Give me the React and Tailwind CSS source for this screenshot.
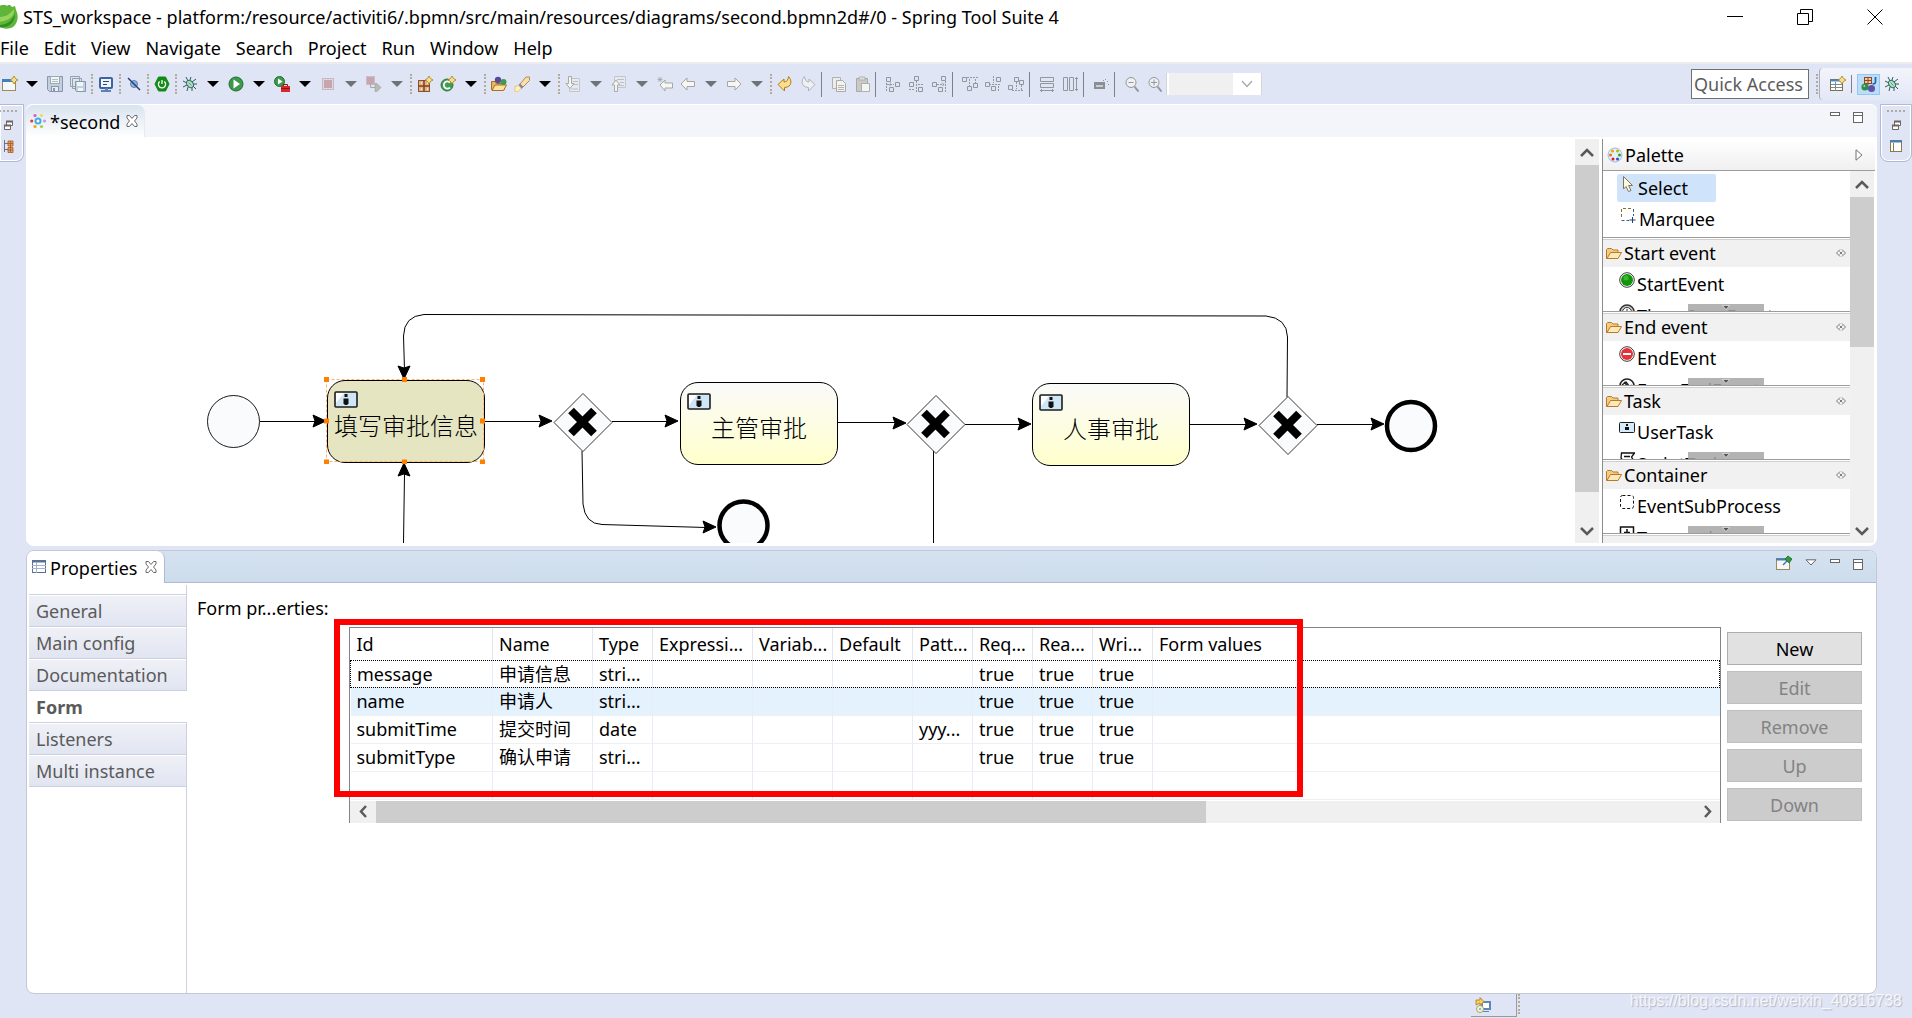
import { useState } from "react";
import clsx from "clsx";

const menus = ["File", "Edit", "View", "Navigate", "Search", "Project", "Run", "Window", "Help"];

const tabs = ["General", "Main config", "Documentation", "Form", "Listeners", "Multi instance"];

const columns = ["Id", "Name", "Type", "Expressi...", "Variab...", "Default", "Patt...", "Req...", "Rea...", "Wri...", "Form values"];

const rows = [
  ["message", "申请信息", "stri...", "", "", "", "", "true", "true", "true", ""],
  ["name", "申请人", "stri...", "", "", "", "", "true", "true", "true", ""],
  ["submitTime", "提交时间", "date", "", "", "", "yyy...", "true", "true", "true", ""],
  ["submitType", "确认申请", "stri...", "", "", "", "", "true", "true", "true", ""],
  ["", "", "", "", "", "", "", "", "", "", ""],
];

// "|" is a dotted grip, "-" a solid separator, "v" / "V" a grey / black menu arrow
const toolbar = [
  "new", "V", "save", "saveAll", "|", "monitor", "|", "skip", "|", "power", "|", "bug", "V", "run", "V", "runTools", "V",
  "stop", "v", "relaunch", "v", "|", "pkg", "newClass", "V", "|", "folderBalls", "rocket", "V", "|", "docDown", "v",
  "docUp", "v", "backStar", "back", "v", "forward", "v", "|", "undo", "redo", "-", "copy", "paste", "-", "alignL",
  "alignC", "alignR", "-", "alignT", "alignM", "alignB", "-", "matchW", "matchH", "-", "snap", "-", "zoomOut", "zoomIn",
];

const spark = <path d="M12 0l1.500 2.500L16 4l-2.500 1.500L12 8l-1.500-2.500L8 4l2.500-1.500z" fill="#f7e08a" stroke="#a8791c" strokeWidth=".8" />;
const arrowLeft = "M1 8l6-6v3.500h7.500v5H7V14z";

const icons = {
  new: (
    <>
      <rect x=".5" y="3.500" width="13" height="11" fill="#f4f8fd" stroke="#a08a50" />
      <rect x="0" y="3" width="14" height="3" fill="#3f7fc4" />
      {spark}
    </>
  ),
  save: (
    <>
      <path d="M.5 .5h15v15h-13l-2-2z" fill="#c3cfdd" stroke="#8597ac" />
      <rect x="3.500" y=".5" width="9" height="7" fill="#f2f5f8" stroke="#9aaabb" />
      <path d="M5 3.500h6M5 5.500h6" stroke="#b5c2a8" />
      <rect x="4.500" y="10.500" width="7" height="5" fill="#e9eef3" stroke="#8597ac" />
      <rect x="6" y="12" width="2" height="3" fill="#8597ac" />
    </>
  ),
  saveAll: (
    <>
      <path d="M.5 .5h9v10h-9zM2.500 2.500h9v10h-9z" fill="#dde4eb" stroke="#93a2b1" />
      <path d="M5.500 5.500h10v10h-9l-1-1z" fill="#c3cfdd" stroke="#8597ac" />
      <rect x="7" y="6" width="6" height="4" fill="#f2f5f8" />
      <rect x="8" y="12" width="5" height="3" fill="#f2f5f8" />
    </>
  ),
  monitor: (
    <>
      <rect x="2" y="2" width="12" height="10" rx="1" fill="#f2f6fc" stroke="#3d63a0" strokeWidth="2" />
      <path d="M5 5.500h6M5 8.500h4" stroke="#27467e" />
      <path d="M3 15h10M7 13h3" stroke="#5d80b5" strokeWidth="2" />
    </>
  ),
  skip: (
    <>
      <circle cx="8" cy="8" r="3.500" fill="#8fb0d8" stroke="#5c80ae" />
      <path d="M2 2l12 12" stroke="#1f3f78" strokeWidth="1.400" />
    </>
  ),
  power: (
    <>
      <path d="M4.500 1h7L15 8l-3.500 7h-7L1 8z" fill="#118a16" stroke="#118a16" strokeLinejoin="round" />
      <path d="M5.700 5.500a3.600 3.600 0 1 0 4.600 0M8 4v4" stroke="#fff" strokeWidth="1.300" fill="none" />
    </>
  ),
  bug: (
    <>
      <path d="M4 1l2 4M9 1l-1 3M14 3l-4 3M1 5l4 2M15 8h-4M1 11l4-2M5 15l1-4M10 15v-4M14 13l-3-3" stroke="#2d5d5c" />
      <ellipse cx="8" cy="8" rx="3" ry="4" fill="#b5dfba" stroke="#33706b" transform="rotate(-40 8 8)" />
      <path d="M6.500 6.500l3 3" stroke="#5c9c86" />
    </>
  ),
  run: (
    <>
      <circle cx="8" cy="8" r="7" fill="#3c9a4a" stroke="#1d7031" />
      <path d="M5.500 3.500L12 8l-6.500 4.500z" fill="#fff" />
    </>
  ),
  runTools: (
    <>
      <circle cx="5.500" cy="5.500" r="5" fill="#3c9a4a" stroke="#1d7031" />
      <path d="M4 2.500L8.500 5.500 4 8.500z" fill="#fff" />
      <path d="M7 10h9v6H7z" fill="#d62a2a" />
      <path d="M9.500 10V8.500h4V10M7 12.500h9" stroke="#8f1414" fill="none" />
    </>
  ),
  stop: (
    <>
      <rect x="2.500" y="2.500" width="11" height="11" fill="#e1d5df" stroke="#c7b7c4" />
      <rect x="4" y="4" width="8" height="8" fill="#c5a5ae" />
    </>
  ),
  relaunch: (
    <>
      <rect x=".5" y=".5" width="8" height="8" fill="#c5a5ae" stroke="#cbbcc8" />
      <path d="M4.500 8v3.500H9" stroke="#a5aaa5" fill="none" />
      <path d="M9 7.500h2l4 4-4 4H9z" fill="#b4bcb5" stroke="#9aa39c" strokeWidth=".6" />
    </>
  ),
  pkg: (
    <>
      <rect x="1.500" y="4.500" width="11" height="11" fill="#e3b184" stroke="#8a5430" />
      <path d="M7 4v12M1 10h12" stroke="#7c4523" strokeWidth="1.500" />
      <path d="M4 7h1M10 7h1M4 13h1M10 13h1" stroke="#fbe5cc" strokeWidth="2" />
      {spark}
    </>
  ),
  newClass: (
    <>
      <circle cx="7" cy="9" r="6" fill="#3f9c51" stroke="#2a7a3c" />
      <path d="M10 6.500a3.600 3.600 0 1 0 0 5" stroke="#fff" strokeWidth="1.800" fill="none" />
      {spark}
    </>
  ),
  folderBalls: (
    <>
      <path d="M.5 5.500h4l1 2h8v6H.5z" fill="#e7b65e" stroke="#a8711e" />
      <circle cx="7" cy="4" r="3.200" fill="#5a4a9c" />
      <circle cx="12.500" cy="6" r="3" fill="#3c9a58" />
      <path d="M1 14.500l3-5.500h11.500l-3 5.500z" fill="#fbe3a4" stroke="#a8711e" />
    </>
  ),
  rocket: (
    <>
      <path d="M6 8L12 1l3.500 0 0 3.500L9 11z" fill="#f8e0ae" stroke="#b48a4a" />
      <path d="M5 8.500l3.500 3.500" stroke="#7d83b8" strokeWidth="2.500" />
      <path d="M1 10.500l4-1 2 3-3 3-3 .5z" fill="#fff4b8" stroke="#e4b457" strokeWidth=".7" />
    </>
  ),
  docDown: (
    <>
      <path d="M4.500 2.500h10v13h-10z" fill="#e6e9ee" stroke="#c2c6cc" />
      <path d="M8 5.500h5M8 8.500h5M6 13h7" stroke="#bcc0c6" />
      <path d="M3.500 .5h3v7h2.500L5 12.500 1 7.500h2.500z" fill="#f4f4f2" stroke="#a9a9a6" />
    </>
  ),
  docUp: (
    <>
      <path d="M3.500 .5h11v11h-11z" fill="#e6e9ee" stroke="#c2c6cc" />
      <path d="M6 3.500h7M9 6.500h4M9 9.500h4" stroke="#bcc0c6" />
      <path d="M3.500 15.500h3V9h2.500L5 4 1 9h2.500z" fill="#f4f4f2" stroke="#a9a9a6" />
    </>
  ),
  backStar: (
    <>
      <path d="M3 9l5-5v3h7.500v5H8v3z" fill="#f6f6f3" stroke="#a6a6a2" />
      <path d="M3 1v5M.5 3.500h5M1 1.500l4 4M5 1.500l-4 4" stroke="#a6a6a2" strokeWidth=".8" />
    </>
  ),
  back: <path d={arrowLeft} fill="#f6f6f3" stroke="#a6a6a2" />,
  forward: <path d={arrowLeft} fill="#f6f6f3" stroke="#a6a6a2" transform="matrix(-1 0 0 1 16 0)" />,
  undo: <path d="M1 8.500L7 3v3c3 0 4-2 4.500-5.500C15 4 15.500 11 7.500 11.500V15z" fill="#ffe08a" stroke="#b27a1e" />,
  redo: <path d="M1 8.500L7 3v3c3 0 4-2 4.500-5.500C15 4 15.500 11 7.500 11.500V15z" fill="#eef0f2" stroke="#b0b3b8" transform="matrix(-1 0 0 1 16 0)" />,
  copy: (
    <>
      <path d="M1.500 1.500h8v11h-8z" fill="#ececea" stroke="#b0b0ae" />
      <path d="M5.500 4.500h6l3 3v8h-9z" fill="#f2f2f0" stroke="#a9a9a6" />
      <path d="M7 9.500h6M7 11.500h6M7 13.500h6" stroke="#b5b5b2" />
    </>
  ),
  paste: (
    <>
      <path d="M2.500 2.500h11v13h-11z" fill="#c9c9c6" stroke="#a9a9a6" />
      <path d="M5 1h6v3H5z" fill="#dededc" stroke="#a9a9a6" strokeWidth=".8" />
      <path d="M7.500 7.500h8v8h-8z" fill="#f4f4f2" stroke="#b0b0ae" />
    </>
  ),
  alignL: (
    <>
      <path d="M1.500 1.500h4v4h-4zM10.500 6.500h4v4h-4zM4.500 11.500h4v4h-4z" />
      <path d="M1.500 7v9M2 8.500h7M6 6.500l-2 2 2 2" strokeDasharray="2 1" />
    </>
  ),
  alignC: (
    <>
      <path d="M6.500 .5h4v4h-4zM1.500 6.500h4v4h-4zM10.500 11.500h4v4h-4z" />
      <path d="M8.500 5v11M10 8.500h5M1 13.500h6" strokeDasharray="2 1" />
    </>
  ),
  alignR: (
    <>
      <path d="M10.500 .5h4v4h-4zM1.500 6.500h4v4h-4zM7.500 11.500h4v4h-4z" />
      <path d="M14.500 5v11M6 8.500h7M11 6.500l2 2-2 2" strokeDasharray="2 1" />
    </>
  ),
  alignT: (
    <>
      <path d="M.5 1.500h4v4h-4zM5.500 10.500h4v4h-4zM11.500 7.500h4v4h-4z" />
      <path d="M5 1.500h11M7.500 3v7M13.500 3v4" strokeDasharray="2 1" />
    </>
  ),
  alignM: (
    <>
      <path d="M.5 6.500h4v4h-4zM6.500 10.500h4v4h-4zM11.500 1.500h4v4h-4z" />
      <path d="M4 8.500h12M8.500 0v7M13.500 10v5" strokeDasharray="2 1" />
    </>
  ),
  alignB: (
    <>
      <path d="M.5 9.500h4v4h-4zM6.500 1.500h4v4h-4zM11.500 4.500h4v4h-4z" />
      <path d="M4 14.500h12M8.500 6v7M13.500 9v5" strokeDasharray="2 1" />
    </>
  ),
  matchW: (
    <>
      <path d="M1.500 1.500h13v4h-13zM1.500 7.500h13v4h-13z" />
      <path d="M1 14.500h14M3 13l-1.500 1.500L3 16M13 13l1.500 1.500L13 16" />
    </>
  ),
  matchH: (
    <>
      <path d="M1.500 1.500h4v13h-4zM7.500 1.500h4v13h-4z" />
      <path d="M14.500 1v14M13 3l1.500-1.500L16 3M13 13l1.500 1.500L16 13" />
    </>
  ),
  snap: (
    <>
      <rect x="1" y="6" width="11" height="7" fill="#8b8e93" stroke="none" />
      <path d="M3 9h7v2H3z" fill="#c9ccd2" stroke="none" />
      <path d="M12 3.500h1M14 5.500h1M10 4.500h1M15 8.500h1" />
    </>
  ),
  zoomOut: (
    <>
      <circle cx="7" cy="6.500" r="5" fill="#eef0f2" />
      <path d="M4.500 6.500h5" />
      <path d="M10.500 10.500l4 5" strokeWidth="2" />
    </>
  ),
  zoomIn: (
    <>
      <circle cx="7" cy="6.500" r="5" fill="#eef0f2" />
      <path d="M4 6.500h6M7 3.500v6" />
      <path d="M10.500 10.500l4 5" strokeWidth="2" />
    </>
  ),
  perspective: (
    <>
      <rect x=".5" y="3.500" width="12" height="11" fill="#fff" stroke="#7b6f4a" />
      <path d="M0 4.500h13" stroke="#4a86c4" strokeWidth="2" />
      <path d="M1 8.500h11M5.500 6v9M1 11.500h11" stroke="#7b8c8a" />
      {spark}
    </>
  ),
  java: (
    <>
      <rect x="3.500" y="1.500" width="7" height="6" fill="#f0c9a0" stroke="#8a4b24" />
      <path d="M7 1v8M3 4.500h8" stroke="#8a4b24" />
      <path d="M14.500 1v5c0 2-2 2-3 1.500" stroke="#2f62a8" strokeWidth="1.700" fill="none" />
      <circle cx="4" cy="11" r="3.600" fill="#2f8d4a" />
      <circle cx="10.500" cy="12.500" r="3.500" fill="#5c52a8" />
      <circle cx="3.300" cy="10" r="1" fill="#a8dbb0" />
    </>
  ),
  restore: (
    <>
      <path d="M6.500 4.500h6v4h-6z" fill="#fff" stroke="#6b6462" />
      <path d="M6 4.500h7" stroke="#6b6462" strokeWidth="2" />
      <path d="M4.500 8.500h6v4h-6z" fill="#fff" stroke="#6b6462" />
      <path d="M4 8.500h7" stroke="#6b6462" strokeWidth="2" />
    </>
  ),
  tree: (
    <>
      <path d="M4.500 2v12M5 5.500h3M5 11.500h3" stroke="#6b7482" />
      <path d="M8 3h5v5H8zM8 9.500h5v5H8z" fill="#e8a268" stroke="#a8581c" strokeWidth=".8" />
      <path d="M10.500 3v11M8 5.500h5M8 12h5" stroke="#a8581c" strokeWidth=".8" />
    </>
  ),
  layout: (
    <>
      <rect x="2.500" y="2.500" width="11" height="11" fill="#fff" stroke="#8a7a4c" />
      <path d="M2 3.500h12" stroke="#3f7fc4" strokeWidth="2" />
      <path d="M5.500 5v9" stroke="#8a7a4c" />
    </>
  ),
  diagram: (
    <>
      <circle cx="8" cy="8" r="2.500" fill="#fff" stroke="#41aee8" strokeWidth="2" />
      <circle cx="5" cy="2.500" r="1.600" fill="#e05ac0" />
      <circle cx="11.500" cy="2.500" r="1.600" fill="#f3dc4a" />
      <circle cx="1.700" cy="8" r="1.600" fill="#ef3a32" />
      <circle cx="14.500" cy="8" r="1.600" fill="#c39be8" />
      <circle cx="5" cy="13.500" r="1.600" fill="#f5a01e" />
      <circle cx="11.500" cy="13.500" r="1.600" fill="#a5cf3f" />
    </>
  ),
  properties: (
    <>
      <rect x="1.500" y="1.500" width="13" height="12" fill="#fff" stroke="#5c6f94" />
      <path d="M1 2.500h14" stroke="#5c6f94" strokeWidth="2" />
      <path d="M1 6.500h14M1 9.500h14M5.500 3v11" stroke="#a3b3cb" />
    </>
  ),
  pin: (
    <>
      <rect x=".5" y="3.500" width="13" height="11" fill="#f4f8fd" stroke="#a08a50" />
      <path d="M0 4.500h14" stroke="#3f7fc4" strokeWidth="2" />
      <path d="M7 10l4-4" stroke="#3b6ea8" strokeWidth="1.300" />
      <path d="M9 4l3-3 4 3-3 4z" fill="#2f9a3c" stroke="#176b24" strokeWidth=".8" />
    </>
  ),
  palette: (
    <>
      <circle cx="8" cy="8" r="7" fill="#e4effa" stroke="#9fbcdc" />
      <circle cx="5.500" cy="4" r="1.500" fill="#f0a400" />
      <circle cx="10.500" cy="4" r="1.500" fill="#b7b900" />
      <circle cx="3.500" cy="8" r="1.500" fill="#e8761a" />
      <circle cx="12.500" cy="8" r="1.500" fill="#2e9a2e" />
      <circle cx="6" cy="12" r="1.500" fill="#d0202a" />
      <circle cx="10.500" cy="12" r="1.500" fill="#2a50c8" />
    </>
  ),
  cursor: <path d="M3.500 .5v12.500l2.500-2.500L8.500 15.500l2.500-1-2.500-5H12.500z" fill="#fdf8df" stroke="#7f7658" />,
  marquee: (
    <>
      <path d="M1.500 10V1.500H13" stroke="#8a6d2f" fill="none" strokeDasharray="3 2" />
      <path d="M13.500 2v7M1.500 13.500H9" stroke="#3d5f80" fill="none" strokeDasharray="3 2" />
      <path d="M12.500 10v6M9.500 13h6" stroke="#1f3f78" />
    </>
  ),
  folder: (
    <>
      <path d="M.5 4.500l1-1h4l1.500 1.500h5v3L3 13.500H.5z" fill="#f2cc84" stroke="#b9792b" />
      <path d="M1 13.500L4.500 7.500h11L12 13.500z" fill="#fce9b5" stroke="#b9792b" />
    </>
  ),
  startEvent: (
    <>
      <circle cx="8" cy="8" r="7.300" fill="#fff" stroke="#3b3b3b" />
      <circle cx="8" cy="8" r="6" fill="#11960a" />
      <circle cx="7" cy="6" r="2.500" fill="#3db534" />
    </>
  ),
  endEvent: (
    <>
      <circle cx="8" cy="8" r="7.300" fill="#fff" stroke="#3b3b3b" />
      <circle cx="8" cy="8" r="6" fill="#e8323a" />
      <path d="M4 8h8" stroke="#fff" strokeWidth="2" />
    </>
  ),
  timer: (
    <>
      <circle cx="8" cy="8" r="7" fill="#ccc" stroke="#333" strokeWidth="1.500" />
      <circle cx="8" cy="8" r="4.500" fill="#fff" stroke="#333" />
      <path d="M8 5v3h2" stroke="#333" fill="none" />
    </>
  ),
  errorEnd: (
    <>
      <circle cx="8" cy="8" r="7" fill="#fff" stroke="#222" strokeWidth="1.600" />
      <path d="M3 7l4-3 4 5 2-2M5 4l6 7" stroke="#222" strokeWidth="1.300" fill="none" />
    </>
  ),
  userTask: (
    <>
      <rect x=".5" y="2.500" width="15" height="10" rx="1" fill="#d6ebf8" stroke="#1d1d1d" />
      <rect x="7" y="4" width="2" height="2" fill="#111" />
      <rect x="6" y="7" width="4" height="3" fill="#111" />
    </>
  ),
  script: <path d="M2.500 1h13l-3 4 3 5v4H2l3-4-3-4zM5 4.500h6M6 8h6" stroke="#111" fill="none" strokeWidth="1.300" />,
  subProcess: <rect x="1.500" y="1.500" width="13" height="13" rx="2" fill="none" stroke="#111" strokeDasharray="3 2" />,
  transaction: (
    <>
      <rect x="1.500" y="1" width="13" height="13" fill="#fff" stroke="#111" strokeWidth="1.500" />
      <path d="M8 3v8M5 6.500h6" stroke="#111" strokeWidth="1.500" />
    </>
  ),
  update: (
    <>
      <rect x="7" y="5" width="8" height="7" fill="#fff" stroke="#5f86bb" strokeWidth="2" />
      <path d="M8 14.500h6" stroke="#5f86bb" />
      <path d="M1 8V3h4V.5l4 4-4 4V6z" fill="#f7cf5e" stroke="#a8791c" strokeWidth=".8" />
      <circle cx="5" cy="12" r="3.500" fill="#eef3df" stroke="#b0a45c" />
      <circle cx="5" cy="12" r="1" fill="#7fa0c0" />
    </>
  ),
};

// outline glyphs share one grey stroke
const outlined = ["alignL", "alignC", "alignR", "alignT", "alignM", "alignB", "matchW", "matchH", "snap", "zoomOut", "zoomIn"];

function Icon({ name }) {
  return (
    <svg viewBox="0 0 16 16" className="size-4 shrink-0" fill="none" stroke={outlined.includes(name) ? "#93969c" : undefined} aria-hidden="true">
      {icons[name]}
    </svg>
  );
}

function CloseX() {
  return (
    <svg viewBox="0 0 12 12" className="size-3 shrink-0" aria-hidden="true">
      <path d="M1 .5h2.500L6 3.500 8.500 .5H11V3L8.500 6 11 9v2.500H8.500L6 8.500 3.500 11.500H1V9l2.500-3L1 3z" fill="#fff" stroke="#6a6a6a" />
    </svg>
  );
}

function MinMax() {
  return (
    <>
      <button type="button" aria-label="Minimize" className="flex h-[10px] w-[10px] items-start">
        <span className="h-1 w-full border border-[#666] bg-white" />
      </button>
      <button type="button" aria-label="Maximize" className="flex h-[11px] w-[10px] items-start border border-[#666] bg-white pt-[2px]">
        <span className="h-px w-full bg-[#666]" />
      </button>
    </>
  );
}

function Grip() {
  return (
    <span className="flex w-[5px] shrink-0 justify-center">
      <span className="h-5 border-l-2 border-dotted border-[#b3ab9c]" />
    </span>
  );
}

function TitleBar() {
  return (
    <header className="flex h-[34px] items-center justify-between overflow-hidden bg-white pr-[29px]">
      <div className="flex items-center gap-[5px]">
        <svg viewBox="6 0 18 24" className="h-6 w-[18px]" aria-hidden="true">
          <path d="M10-1l3 2 2-2 3 3 3-1 1 4c3 6 2 13-3 17-5 3-13 2-18-3V3z" fill="#5fb53a" />
          <path d="M4 12c8 0 11-2 16-8 1 7-5 12-16 13z" fill="#97d45e" />
          <path d="M4 20c9 0 14-4 17-11 0 8-6 15-17 13z" fill="#2f8f22" />
        </svg>
        <h1>STS_workspace - platform:/resource/activiti6/.bpmn/src/main/resources/diagrams/second.bpmn2d#/0 - Spring Tool Suite 4</h1>
      </div>
      <div className="flex gap-[54px]">
        {["M0 7.500h16", "M.5 4.500h11v11H.5zM3.500 4V.5h12v12H12", "M.5 .5l15 15M15.500 .5l-15 15"].map((d, i) => (
          <button key={d} type="button" aria-label={["Minimize window", "Restore window", "Close window"][i]}>
            <svg viewBox="0 0 16 16" className="size-4" fill="none" stroke="#000">
              <path d={d} />
            </svg>
          </button>
        ))}
      </div>
    </header>
  );
}

function Toolbar() {
  return (
    <div className="flex h-[42px] items-center justify-between border-t-2 border-[#ececf0]">
      <div className="flex items-center">
        {toolbar.map((item, i) => {
          if (item === "|") return <Grip key={i} />;
          if (item === "-") return <span key={i} className="ml-[2px] h-[25px] w-[6px] shrink-0 border-l border-[#7d8088]" />;
          if (item === "v" || item === "V")
            return (
              <button key={i} type="button" aria-label="Show menu" className="flex w-[23px] shrink-0 justify-center">
                <svg viewBox="0 0 12 6" className={clsx("h-[6px] w-3", item === "V" ? "fill-black" : "fill-[#6f7278]")}>
                  <path d="M0 0h12L6 6z" />
                </svg>
              </button>
            );
          return (
            <button key={i} type="button" aria-label={item} className={clsx("flex shrink-0 justify-center", i === 0 ? "w-5" : "w-[23px]")}>
              <Icon name={item} />
            </button>
          );
        })}
        <div className="relative flex h-[22px] w-24 items-center border-x border-[#d4d6da] bg-white">
          <select aria-label="Zoom" disabled className="h-full w-[66px] appearance-none border-l-2 border-white bg-[#f0f0f0]">
            <option></option>
          </select>
          <svg viewBox="0 0 12 8" className="ml-2 h-2 w-3" fill="none" stroke="#a8a8a8">
            <path d="M1 1l5 5.500L11 1" strokeWidth="1.300" />
          </svg>
        </div>
      </div>
      <div className="flex items-center">
        <input
          aria-label="Quick Access"
          placeholder="Quick Access"
          className="h-[30px] w-[118px] border border-[#707070] bg-white px-[2px] placeholder:text-[#5c5c5c]"
        />
        <span className="ml-[5px]">
          <Grip />
        </span>
        <div className="flex h-8 items-center rounded-l border-l border-[#aab] bg-gradient-to-b from-[#f2f4fb] to-[#e3e8f6] pr-3 pl-[10px]">
          <button type="button" aria-label="Open perspective">
            <Icon name="perspective" />
          </button>
          <span className="mx-[5px] h-[18px] border-l border-[#7d8088]" />
          <button type="button" aria-label="Java perspective" className="flex h-[21px] w-[23px] items-center justify-center border border-[#90c8f6] bg-[#bcdcf8]">
            <Icon name="java" />
          </button>
          <button type="button" aria-label="Debug perspective" className="ml-1">
            <Icon name="bug" />
          </button>
        </div>
      </div>
    </div>
  );
}

function SideStrip({ side, second }) {
  return (
    <aside
      className={clsx(
        "flex h-[58px] flex-col items-center gap-[5px] border border-[#b3b8d3] pt-[5px] shadow-[inset_0_0_0_1px_#fff]",
        side === "left" ? "mr-[2px] w-6 rounded-br-lg border-l-0 pr-2" : "ml-[3px] w-8 rounded-b-lg",
      )}
    >
      <span className="w-[18px] border-t-2 border-dotted border-[#b3ab9c]" />
      <button type="button" aria-label="Restore">
        <Icon name="restore" />
      </button>
      <button type="button" aria-label="Show view">
        <Icon name={second} />
      </button>
    </aside>
  );
}

function ScrollArrow({ dir }) {
  const paths = { up: "M1 8l6-6 6 6", down: "M1 2l6 6 6-6", left: "M8 1L3 6.500 8 12", right: "M3 1l5 5.500L3 12" };
  const flat = dir === "left" || dir === "right";
  return (
    <button type="button" aria-label={`Scroll ${dir}`} className={clsx("flex shrink-0 items-center justify-center", flat ? "h-full w-[26px]" : "h-[26px] w-full pt-[2px]")}>
      <svg viewBox={flat ? "0 0 11 13" : "0 0 14 10"} className={flat ? "h-[13px] w-[11px]" : "h-[10px] w-[14px]"} fill="none" stroke="#5a5a5a" strokeWidth="2.500">
        <path d={paths[dir]} />
      </svg>
    </button>
  );
}

function Task({ label, className }) {
  return (
    <div className={clsx("absolute flex h-[83px] w-[158px] flex-col rounded-[18px] border border-black px-[6px] pt-[10px]", className)}>
      <svg viewBox="0 0 24 17" className="h-[17px] w-6" aria-hidden="true">
        <rect x="1" y="1" width="22" height="15" rx="1" fill="#cfe6f6" stroke="#1d1d1d" strokeWidth="1.600" />
        <path d="M2 2h8L2 12z" fill="#fff" />
        <rect x="10.500" y="3" width="3" height="3" fill="#111" />
        <path d="M9.500 7.500h5v5l-1.500 1.500h-2l-1.500-1.500z" fill="#111" />
      </svg>
      <span className="mt-[3px] text-center font-['Noto_Sans_CJK_SC',sans-serif] text-[24px] leading-[28px] font-light whitespace-nowrap">{label}</span>
    </div>
  );
}

function Gateway({ x, y }) {
  return (
    <g>
      <path d={`M${x} ${y - 29}L${x + 29} ${y}L${x} ${y + 29}L${x - 29} ${y}z`} fill="#fafbfd" stroke="#222" strokeWidth=".9" />
      <path d={`M${x - 12} ${y - 12}l23 23m0 -23l-23 23`} stroke="#000" strokeWidth="8" />
    </g>
  );
}

function Canvas() {
  const heads = [
    [326, 421, 0],
    [552, 421, 0],
    [678, 421, 0],
    [906, 423, 0],
    [1031, 424, 0],
    [1257, 424, 0],
    [1384, 424, 0],
    [716, 527, 0],
    [404, 379, 90],
    [404, 463, -90],
  ];
  return (
    <div className="relative min-w-0 flex-1 overflow-hidden bg-white">
      <svg viewBox="26 139 1549 404" className="absolute top-0 left-0 h-[404px] w-[1549px]" fill="none" stroke="#000">
        <circle cx="233.500" cy="421.500" r="26" fill="#fafbfd" strokeWidth=".9" />
        <path d="M260 421.500H315M485 421.500H540M612 421.500H668M837 422.500H895M965 424.500H1020M1190 424.500H1246M1317 424.500H1373" />
        <path d="M1287 397L1287.500 337Q1287 318 1266 316L424 314.500Q404 316 403.500 336L404.500 370" />
        <path d="M403.500 543L404.500 474M582 451L583 504Q585 524 602 524.500L706 527.500M933.500 451V543" />
        {heads.map(([x, y, angle]) => (
          <path key={`${x}-${y}`} d="M0 0L-13 -6L-11 0L-13 6z" fill="#000" transform={`translate(${x} ${y}) rotate(${angle})`} />
        ))}
        <Gateway x={583} y={422.5} />
        <Gateway x={936} y={424.5} />
        <Gateway x={1288} y={425.5} />
        <circle cx="1411" cy="426" r="24" fill="#fafbfd" strokeWidth="4.500" />
        <circle cx="743.500" cy="525.500" r="24" fill="#fafbfd" strokeWidth="4.500" />
      </svg>
      <Task label="填写审批信息" className="top-[241px] left-[301px] bg-[#e5e5c1]" />
      <Task label="主管审批" className="top-[243px] left-[654px] bg-gradient-to-b from-[#fafafa] to-[#ffffcb]" />
      <Task label="人事审批" className="top-[244px] left-[1006px] bg-gradient-to-b from-[#fafafa] to-[#ffffcb]" />
      <svg viewBox="0 0 164 88" className="pointer-events-none absolute top-[237px] left-[298px] h-[88px] w-[164px]">
        <rect x="2.500" y="3.500" width="157" height="82" fill="none" stroke="#ffb36b" strokeDasharray="3 2" />
        {[2.5, 80.5, 158.5].map((x) =>
          [3.5, 45, 86].map((y) => (x === 80.5 && y === 45 ? null : <rect key={`${x}${y}`} x={x - 2.5} y={y - 2.5} width="5" height="5" fill="#ff8000" />)),
        )}
      </svg>
    </div>
  );
}

const drawers = [
  { title: "Start event", icon: "startEvent", item: "StartEvent", nextIcon: "timer", next: "TimerStartEvent" },
  { title: "End event", icon: "endEvent", item: "EndEvent", nextIcon: "errorEnd", next: "ErrorEndEvent" },
  { title: "Task", icon: "userTask", item: "UserTask", nextIcon: "script", next: "ScriptTask" },
  { title: "Container", icon: "subProcess", item: "EventSubProcess", nextIcon: "transaction", next: "Transaction" },
];

function DrawerHeader({ title }) {
  return (
    <button type="button" className="flex h-[30px] w-full items-center border-t border-[#9c9c9c] bg-[#f1f1f1] pr-1 pl-[3px] shadow-[inset_0_1px_0_#fff,inset_0_2px_0_#cfcfcf]">
      <Icon name="folder" />
      <span className="ml-[2px]">{title}</span>
      <svg viewBox="0 0 10 8" className="ml-auto h-2 w-[10px]" fill="none" stroke="#6f6f6f">
        <path d="M4 .5L.5 4 4 7.500M6 .5L9.500 4 6 7.500M3.500 2.500l3 3M6.500 2.500l-3 3" strokeWidth=".9" />
      </svg>
    </button>
  );
}

function Palette() {
  return (
    <div className="ml-[3px] flex w-[273px] flex-col border-l border-[#8c8c8c] bg-white">
      <div className="flex h-8 shrink-0 items-center border-b border-[#9c9c9c] bg-gradient-to-b from-white to-[#f0f0f0] pr-[12px] pl-1">
        <Icon name="palette" />
        <h2 className="ml-[2px]">Palette</h2>
        <button type="button" aria-label="Collapse palette" className="ml-auto">
          <svg viewBox="0 0 8 12" className="h-3 w-2" fill="#fff" stroke="#707070">
            <path d="M1 .8L7 6 1 11.200z" />
          </svg>
        </button>
      </div>
      <div className="flex min-h-0 flex-1">
        <div className="min-w-0 flex-1 overflow-hidden">
          <div className="flex h-[66px] flex-col items-start pt-[3px] pl-[14px]">
            <button type="button" className="flex h-7 w-[99px] items-center rounded-xs bg-[#cfe3fa] pl-[3px]">
              <span className="mb-2">
                <Icon name="cursor" />
              </span>
              <span className="ml-[2px]">Select</span>
            </button>
            <button type="button" className="mt-[3px] flex h-7 items-center pl-[3px]">
              <span className="mb-2">
                <Icon name="marquee" />
              </span>
              <span className="ml-[3px]">Marquee</span>
            </button>
          </div>
          {drawers.map((d) => (
            <section key={d.title} className="relative h-[74px] overflow-hidden">
              <DrawerHeader title={d.title} />
              <button type="button" className="flex h-[34px] items-center pl-4">
                <span className="mb-2">
                  <Icon name={d.icon} />
                </span>
                <span className="ml-[2px]">{d.item}</span>
              </button>
              <button type="button" className="flex h-8 items-start pl-4">
                <span className="mt-[3px]">
                  <Icon name={d.nextIcon} />
                </span>
                <span className="ml-[2px] leading-[30px]">{d.next}</span>
              </button>
              <button type="button" aria-label="Scroll drawer" className="absolute bottom-0 left-[85px] flex h-[7px] w-[76px] justify-center bg-[#a6a6a6]/85">
                <svg viewBox="0 0 8 5" className="mt-px h-[5px] w-2">
                  <path d="M.5 .5h7L4 4.500z" fill="#555" stroke="#fff" strokeWidth=".6" />
                </svg>
              </button>
            </section>
          ))}
          <DrawerHeader title="Gateway" />
        </div>
        <div className="mr-px flex w-6 flex-col bg-[#f0f0f0]">
          <ScrollArrow dir="up" />
          <div className="h-[150px] bg-[#cdcdcd]" />
          <div className="mt-auto">
            <ScrollArrow dir="down" />
          </div>
        </div>
      </div>
    </div>
  );
}

function Editor() {
  return (
    <section className="overflow-hidden rounded-t-md rounded-b-lg border-t border-white bg-white">
      <div className="flex h-8 items-start justify-between bg-[#f4f5fb] pr-[14px]">
        <div className="flex h-full w-[119px] items-center rounded-t-lg border-r border-[#e6e9f2] bg-gradient-to-b from-[#d8e3ee] to-white pl-1">
          <Icon name="diagram" />
          <button type="button" className="ml-1 pt-[2px]">*second</button>
          <button type="button" aria-label="Close second" className="ml-[6px]">
            <CloseX />
          </button>
        </div>
        <div className="flex gap-[13px] pt-[7px]">
          <MinMax />
        </div>
      </div>
      <div className="flex h-[409px] pt-[2px] pr-[2px] pb-[3px]">
        <Canvas />
        <div className="flex w-6 flex-col bg-[#f0f0f0]">
          <ScrollArrow dir="up" />
          <div className="h-[327px] bg-[#cdcdcd]" />
          <div className="mt-auto">
            <ScrollArrow dir="down" />
          </div>
        </div>
        <Palette />
      </div>
    </section>
  );
}

function FormTable({ selected, onSelect }) {
  return (
    <div className="relative ml-[152px] min-w-0 flex-1 self-start border-x border-t border-[#82848c]">
      <table className="w-full table-fixed border-collapse text-left">
        <colgroup>
          <col className="w-[142px]" />
          <col className="w-[100px]" />
          <col className="w-[60px]" />
          <col className="w-[100px]" />
          <col className="w-[80px]" />
          <col className="w-[80px]" />
          <col className="w-[60px]" />
          <col className="w-[60px]" />
          <col className="w-[60px]" />
          <col className="w-[60px]" />
          <col />
        </colgroup>
        <thead>
          <tr className="h-8">
            {columns.map((c) => (
              <th key={c} className="border-r border-[#e3e6ec] p-0 pl-[6px] font-normal whitespace-nowrap last:border-r-0">{c}</th>
            ))}
          </tr>
        </thead>
        <tbody>
          {rows.map((row, i) => (
            <tr
              key={i}
              onClick={() => onSelect(i)}
              className={clsx(i === 0 ? "h-[27px] border border-dotted border-black" : "h-7 border-b border-[#eef0f2]", i === selected && "bg-[#e4f2fe]")}
            >
              {row.map((cell, j) => (
                <td key={j} className="border-r border-[#e7edf6] p-0 pl-[6px] leading-6 whitespace-nowrap last:border-r-0">{cell}</td>
              ))}
            </tr>
          ))}
        </tbody>
      </table>
      <div className="mt-px flex h-[22px] items-center bg-[#f0f0f0]">
        <ScrollArrow dir="left" />
        <div className="h-full w-[830px] bg-[#cdcdcd]" />
        <div className="ml-auto h-full">
          <ScrollArrow dir="right" />
        </div>
      </div>
      <div className="pointer-events-none absolute -top-[9px] -left-[16px] h-[178px] w-[969px] border-[6px] border-[#fe0000]" />
    </div>
  );
}

function Properties() {
  const [tab, setTab] = useState("Form");
  const [selected, setSelected] = useState(1);

  return (
    <section className="mt-1 flex flex-1 flex-col overflow-hidden rounded-lg border border-[#c4c8d2] bg-white">
      <div className="flex h-8 shrink-0 items-end bg-gradient-to-b from-[#d4e2f0] to-[#cddcec]">
        <div className="flex h-full w-[138px] items-center rounded-tr-lg border-r border-[#b3b8d3] bg-white pl-1">
          <Icon name="properties" />
          <h2 className="ml-[3px] pt-[2px]">Properties</h2>
          <button type="button" aria-label="Close Properties" className="ml-2">
            <CloseX />
          </button>
        </div>
        <div className="flex h-full flex-1 items-start justify-end gap-[13px] border-b border-[#b3b8d3] pt-2 pr-[13px]">
          <button type="button" aria-label="Pin to selection" className="-mt-1">
            <Icon name="pin" />
          </button>
          <button type="button" aria-label="View menu">
            <svg viewBox="0 0 12 7" className="h-[7px] w-3" fill="#fff" stroke="#666">
              <path d="M1 .8h10L6 6z" />
            </svg>
          </button>
          <MinMax />
        </div>
      </div>
      <div className="flex flex-1 pt-[2px] pl-[2px]">
        <nav className="flex w-[158px] shrink-0 flex-col border-r border-[#ccd1e2] pt-[9px]">
          {tabs.map((t) => (
            <button
              key={t}
              type="button"
              onClick={() => setTab(t)}
              className={clsx(
                "h-8 border-t pl-[7px] text-left text-[#5a5a5a]",
                t === tab ? "-mr-px border-[#ccd1e2] bg-white font-bold" : "border-[#ccd1e2] bg-gradient-to-b from-[#f0f1f7] to-[#e1e5f1] shadow-[inset_0_1px_0_#fff]",
              )}
            >
              {t}
            </button>
          ))}
          <span className="border-t border-[#ccd1e2]" />
        </nav>
        <div className="min-w-0 flex-1 pr-[14px] pl-[10px]">
          <p className="pt-[11px] leading-6">Form pr...erties:</p>
          <div className="mt-[7px] flex items-start">
            <FormTable selected={selected} onSelect={setSelected} />
            <div className="ml-[6px] flex w-[135px] flex-col gap-[6px] pt-[5px]">
              {["New", "Edit", "Remove", "Up", "Down"].map((b) => (
                <button
                  key={b}
                  type="button"
                  disabled={b !== "New"}
                  className="h-[33px] border border-[#adadad] bg-[#e1e1e1] disabled:border-[#bfbfbf] disabled:bg-[#cccccc] disabled:text-[#838383]"
                >
                  {b}
                </button>
              ))}
            </div>
          </div>
        </div>
      </div>
    </section>
  );
}

export default function App() {
  return (
    <div className="flex min-h-screen flex-col overflow-hidden bg-[#e0e5f5] font-['Noto_Sans','Noto_Sans_CJK_SC',sans-serif] text-[18px] leading-6 text-black">
      <TitleBar />
      <nav className="flex h-7 items-center gap-[15px] bg-white">
        {menus.map((m) => (
          <button key={m} type="button">{m}</button>
        ))}
      </nav>
      <Toolbar />
      <main className="flex flex-1">
        <SideStrip side="left" second="tree" />
        <div className="flex min-w-0 flex-1 flex-col">
          <Editor />
          <Properties />
        </div>
        <SideStrip side="right" second="layout" />
      </main>
      <footer className="flex h-6 items-start justify-end pr-[10px]">
        <div className="flex h-[23px] w-[46px] items-center border-r border-b border-[#9a9a96] pl-1">
          <Icon name="update" />
        </div>
        <Grip />
        <span className="ml-[108px] font-['Liberation_Sans',sans-serif] text-[16px] leading-[14px] text-white/80 [text-shadow:1px_1px_1px_#b0b4c4]">
          https://blog.csdn.net/weixin_40816738
        </span>
      </footer>
    </div>
  );
}
